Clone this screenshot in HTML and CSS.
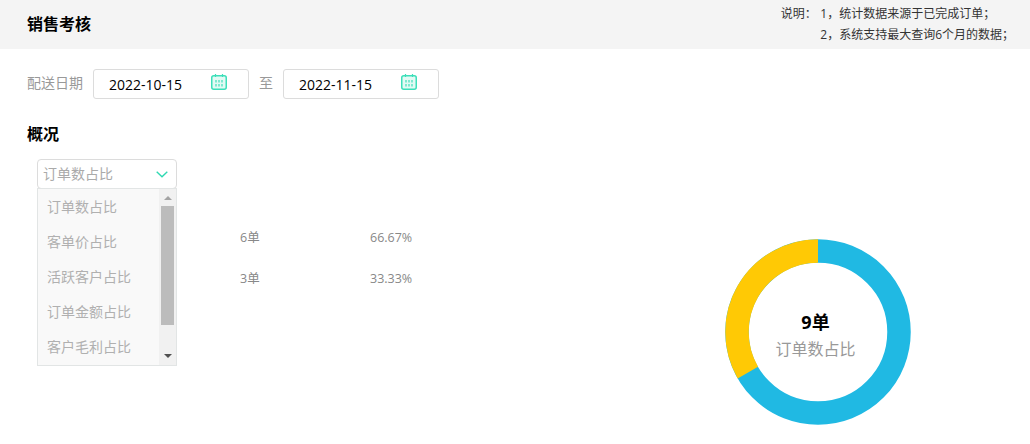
FILE: index.html
```html
<!DOCTYPE html>
<html lang="zh-CN">
<head>
    <meta charset="UTF-8">
    <meta name="viewport" content="width=device-width, initial-scale=1.0">
    <title>销售考核</title>
    <link rel="stylesheet" href="styles.css">
</head>
<body>
    <header class="top">
        <h1 class="top-title">销售考核</h1>
        <div class="notes">
            <div class="notes-label">说明：</div>
            <div class="notes-list">
                <div>1，统计数据来源于已完成订单；</div>
                <div>2，系统支持最大查询6个月的数据；</div>
            </div>
        </div>
    </header>

    <div class="filter">
        <span class="filter-label">配送日期</span>
        <div class="date">
            <span>2022-10-15</span>
            <svg class="date-icon" viewBox="0 0 16 16" width="16" height="16">
                <rect x="0.75" y="1.75" width="14.5" height="13.5" rx="2" fill="#e3faf4" stroke="#3ddfb9" stroke-width="1.5"/>
                <path d="M4.5 0v3M11.5 0v3" stroke="#3ddfb9" stroke-width="1.2"/>
                <path d="M4 6h2v2.5H4zM7 6h2v2.5H7zM10 6h2v2.5h-2zM4 10h2v2.5H4zM7 10h2v2.5H7zM10 10h2v2.5h-2z" fill="#7fe9d0"/>
            </svg>
        </div>
        <span class="filter-sep">至</span>
        <div class="date">
            <span>2022-11-15</span>
            <svg class="date-icon" viewBox="0 0 16 16" width="16" height="16">
                <rect x="0.75" y="1.75" width="14.5" height="13.5" rx="2" fill="#e3faf4" stroke="#3ddfb9" stroke-width="1.5"/>
                <path d="M4.5 0v3M11.5 0v3" stroke="#3ddfb9" stroke-width="1.2"/>
                <path d="M4 6h2v2.5H4zM7 6h2v2.5H7zM10 6h2v2.5h-2zM4 10h2v2.5H4zM7 10h2v2.5H7zM10 10h2v2.5h-2z" fill="#7fe9d0"/>
            </svg>
        </div>
    </div>

    <h2 class="section-title">概况</h2>

    <div class="picker">
        <div class="select">
            <span class="select-text">订单数占比</span>
            <svg class="select-arrow" viewBox="0 0 12 7" width="12" height="7">
                <path d="M0.7 0.8L6 5.8L11.3 0.8" fill="none" stroke="#2fd9b2" stroke-width="1.4"/>
            </svg>
        </div>
        <div class="menu">
            <ul class="menu-list">
                <li>订单数占比</li>
                <li>客单价占比</li>
                <li>活跃客户占比</li>
                <li>订单金额占比</li>
                <li>客户毛利占比</li>
            </ul>
            <div class="scrollbar">
                <span class="scroll-up"></span>
                <span class="scroll-thumb"></span>
                <span class="scroll-down"></span>
            </div>
        </div>
    </div>

    <div class="overview">
        <div class="stats">
            <div class="stat"><span class="stat-count">6单</span><span>66.67%</span></div>
            <div class="stat"><span class="stat-count">3单</span><span>33.33%</span></div>
        </div>
        <div class="donut">
            <svg viewBox="0 0 186 186" width="186" height="186">
                <circle cx="93" cy="93" r="81" fill="none" stroke="#20b9e3" stroke-width="23.5"/>
                <path d="M22.85 133.5A81 81 0 0 1 93 12" fill="none" stroke="#ffc905" stroke-width="23.5"/>
            </svg>
            <div class="donut-text">
                <div class="donut-value">9单</div>
                <div class="donut-label">订单数占比</div>
            </div>
        </div>
    </div>
</body>
</html>
```

FILE: styles.css
```css
body{
    margin: 0;
    height: 444px;
    overflow: hidden;
    background: #fff;
    font-family: 'Open Sans', 'Noto Sans CJK SC', sans-serif;
    font-size: 14px;
    color: #000;
}
.top{
    display: flex;
    justify-content: space-between;
    height: 49px;
    padding: 0 16px 0 27px;
    background: #f4f4f4;
}
.top-title{
    margin: 0;
    font-size: 16px;
    font-weight: 700;
    line-height: 49px;
}
.notes{
    display: flex;
    padding-top: 3px;
    font-size: 12px;
    line-height: 21px;
    color: #333;
}
.notes-label{
    width: 39.5px;
}
.filter{
    display: flex;
    align-items: center;
    height: 30px;
    padding: 20px 0 0 27px;
}
.filter-label{
    width: 66px;
    color: #999;
    line-height: 28px;
    margin-bottom: 2px;
}
.filter-sep{
    width: 34px;
    padding-left: 10px;
    box-sizing: border-box;
    color: #999;
    line-height: 28px;
    margin-bottom: 2px;
}
.date{
    display: flex;
    justify-content: space-between;
    align-items: center;
    box-sizing: border-box;
    width: 156px;
    height: 30px;
    padding: 0 21px 0 15px;
    border: 1px solid #dcdcdc;
    border-radius: 3px;
}
.date-icon{
    margin-bottom: 4px;
}
.section-title{
    margin: 23px 0 0 27px;
    font-size: 16px;
    font-weight: 700;
    line-height: 24px;
}
.picker{
    position: relative;
    width: 140px;
    margin: 13px 0 0 37px;
}
.select{
    display: flex;
    justify-content: space-between;
    align-items: center;
    box-sizing: border-box;
    height: 30px;
    padding: 0 8px 0 5px;
    border: 1px solid #dcdcdc;
    border-radius: 4px;
    color: #aaa;
}
.select-text{
    margin-bottom: 2px;
}
.menu{
    position: absolute;
    top: 29px;
    left: 0;
    z-index: 2;
    display: flex;
    box-sizing: border-box;
    width: 140px;
    height: 178px;
    border: 1px solid #e2e5e5;
    background: #f9f9f9;
}
.menu-list{
    flex: 1;
    margin: 0;
    padding: 0 0 0 9px;
    list-style: none;
    color: #b0b0b0;
}
.menu-list li{
    height: 35px;
    line-height: 35px;
}
.scrollbar{
    display: flex;
    flex-direction: column;
    align-items: center;
    width: 17px;
    background: #f1f1f1;
}
.scroll-thumb{
    width: 13px;
    height: 119px;
    margin: 6px 0 29px;
    background: #bcbcbc;
}
.scroll-up{
    width: 0;
    height: 0;
    margin-top: 7px;
    border: 4px solid transparent;
    border-top: 0;
    border-bottom: 4px solid #a3a3a3;
}
.scroll-down{
    width: 0;
    height: 0;
    border: 4px solid transparent;
    border-bottom: 0;
    border-top: 4px solid #505050;
}
.overview{
    display: flex;
    justify-content: space-between;
    padding: 28px 119px 0 240px;
}
.stats{
    font-size: 12.5px;
    color: #888;
}
.stat{
    display: flex;
    height: 41px;
    line-height: 41px;
}
.stat-count{
    width: 130px;
}
.donut{
    position: relative;
    width: 186px;
    height: 186px;
    margin-top: 22px;
}
.donut svg{
    display: block;
}
.donut-text{
    position: absolute;
    top: 0;
    left: 0;
    right: 0;
    bottom: 0;
    padding: 7px 5px 0 0;
    display: flex;
    flex-direction: column;
    justify-content: center;
    align-items: center;
}
.donut-value{
    font-size: 18px;
    font-weight: 700;
    line-height: 26px;
}
.donut-label{
    font-size: 16px;
    line-height: 28px;
    color: #999;
}
```
